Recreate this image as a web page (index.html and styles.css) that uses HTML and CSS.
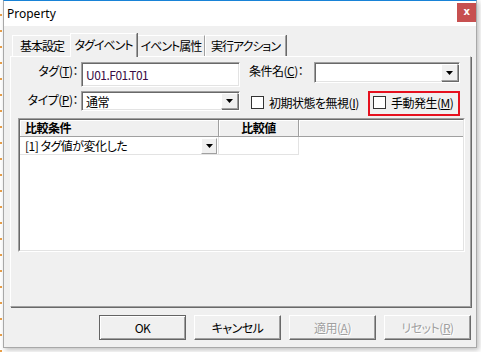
FILE: index.html
```html
<!DOCTYPE html>
<html lang="ja">
<head>
    <meta charset="UTF-8">
    <title>Property</title>
    <link rel="stylesheet" href="styles.css">
</head>
<body>
    <div class="window">
        <div class="titlebar">
            <span class="title">Property</span>
            <span class="close">x</span>
        </div>
        <div class="window-body">
            <div class="tabs">
                <div class="tab tab-basic">基本設定</div>
                <div class="tab tab-tag active">タグイベント</div>
                <div class="tab tab-attr">イベント属性</div>
                <div class="tab tab-action">実行アクション</div>
            </div>
            <div class="panel">
                <div class="row">
                    <span class="label">タグ(<u>T</u>)：</span>
                    <div class="textbox tag-input">U01.F01.T01</div>
                    <span class="label cond-label">条件名(<u>C</u>)：</span>
                    <div class="combo cond-combo">
                        <span class="combo-text"></span>
                        <span class="drop"><svg width="7" height="4" viewBox="0 0 7 4"><path d="M0 0h7l-3.5 4z" fill="#000"/></svg></span>
                    </div>
                </div>
                <div class="row row-type">
                    <span class="label">タイプ(<u>P</u>)：</span>
                    <div class="combo type-combo">
                        <span class="combo-text">通常</span>
                        <span class="drop"><svg width="7" height="4" viewBox="0 0 7 4"><path d="M0 0h7l-3.5 4z" fill="#000"/></svg></span>
                    </div>
                    <label class="check ignore-check"><span class="box"></span><span>初期状態を無視(<u>I</u>)</span></label>
                    <div class="highlight">
                        <label class="check"><span class="box"></span><span>手動発生(<u>M</u>)</span></label>
                    </div>
                </div>
                <div class="grid">
                    <div class="grid-body">
                        <div class="grid-head">
                            <div class="cell col-cond">比較条件</div>
                            <div class="cell col-value">比較値</div>
                            <div class="cell col-fill"></div>
                        </div>
                        <div class="grid-row">
                            <div class="cell col-cond">
                                <span>[1] タグ値が変化した</span>
                                <span class="drop small"><svg width="7" height="4" viewBox="0 0 7 4"><path d="M0 0h7l-3.5 4z" fill="#000"/></svg></span>
                            </div>
                            <div class="cell col-value"></div>
                        </div>
                    </div>
                </div>
            </div>
            <div class="buttons">
                <button class="btn default">OK</button>
                <button class="btn">キャンセル</button>
                <button class="btn" disabled>適用(<u>A</u>)</button>
                <button class="btn" disabled>リセット(<u>R</u>)</button>
            </div>
        </div>
    </div>
</body>
</html>
```

FILE: styles.css
```css
body {
    margin: 0;
    width: 481px;
    height: 352px;
    overflow: hidden;
    font-family: "Noto Sans CJK JP", sans-serif;
    font-size: 12px;
    font-feature-settings: "palt";
    letter-spacing: -0.5px;
    color: #000;
    background:
        repeating-linear-gradient(to bottom, #fff 0 14px, #e9a04a 14px 16px) left top / 2px 100% no-repeat,
        #fff;
}

u {
    text-decoration: underline;
    text-underline-offset: 1px;
}

.window {
    margin-left: 3px;
    width: 474px;
    height: 348px;
    box-sizing: border-box;
    display: flex;
    flex-direction: column;
    background: #f0f0f0;
    border: 1px solid #a8a8a8;
    border-top-color: #1883d7;
    box-shadow: 2px 2px 5px rgba(0, 0, 0, 0.25);
}

.titlebar {
    height: 25px;
    display: flex;
    align-items: flex-start;
    background: #fff;
}

.title {
    font-family: "Noto Sans", sans-serif;
    letter-spacing: 0;
    line-height: 25px;
    padding-left: 3px;
}

.close {
    margin: 2px 0 0 auto;
    width: 19px;
    height: 19px;
    background: #c75050;
    color: #fff;
    font-family: "DejaVu Sans", sans-serif;
    font-weight: bold;
    font-size: 10px;
    line-height: 18px;
    text-align: center;
}

.window-body {
    flex: 1;
    padding: 7px 5px 7px 6px;
    display: flex;
    flex-direction: column;
}

/* tabs */
.tabs {
    height: 23px;
    display: flex;
    align-items: flex-end;
    padding-left: 2px;
}

.tab {
    flex-shrink: 0;
    box-sizing: border-box;
    height: 21px;
    line-height: 20px;
    letter-spacing: -1px;
    text-align: center;
    border: 1px solid;
    border-bottom: 0;
    border-color: #fff #a0a0a0 transparent #fff;
    box-shadow: 1px 0 0 #696969;
    white-space: nowrap;
}

.tab-basic { width: 60px; }
.tab-tag { width: 67px; }
.tab-attr { width: 68px; }
.tab-action { width: 81px; }

.tab.active {
    position: relative;
    z-index: 1;
    height: 24px;
    line-height: 21px;
    margin: 0 0 -1px -2px;
    background: #f0f0f0;
}

.panel {
    height: 251px;
    box-sizing: border-box;
    padding: 5px 10px 0 0;
    border: 1px solid;
    border-color: #fff #a0a0a0 #a0a0a0 #fff;
    box-shadow: 1px 1px 0 #696969;
}

/* form rows */
.row {
    display: flex;
    align-items: flex-start;
    height: 25px;
}

.row > * {
    flex-shrink: 0;
}

.row-type {
    margin-top: 4px;
    height: 24px;
}

.label {
    width: 67px;
    margin-right: 3px;
    text-align: right;
    line-height: 17px;
    white-space: nowrap;
}

.cond-label {
    width: auto;
    margin: 0 0 0 9px;
    line-height: 18px;
}

.textbox,
.combo {
    box-sizing: border-box;
    background: #fff;
    border: 1px solid;
    border-color: #a0a0a0 #fff #fff #a0a0a0;
    box-shadow: inset 1px 1px 0 #696969, inset -1px -1px 0 #e3e3e3;
}

.textbox {
    height: 25px;
    line-height: 23px;
    padding-left: 4px;
}

.tag-input {
    width: 159px;
    color: #3a0c44;
}

.combo {
    display: flex;
    height: 21px;
    padding: 1px;
}

.cond-combo {
    width: 146px;
    margin-left: auto;
}

.type-combo {
    width: 159px;
    height: 20px;
}

.combo-text {
    flex: 1;
    padding-left: 3px;
    line-height: 17px;
}

.drop {
    width: 17px;
    box-sizing: border-box;
    display: flex;
    align-items: center;
    justify-content: center;
    background: #f0f0f0;
    border: 1px solid;
    border-color: #fff #a0a0a0 #a0a0a0 #fff;
    box-shadow: 1px 1px 0 #696969;
}

.drop.small {
    width: 16px;
    height: 16px;
    margin-left: auto;
    box-shadow: none;
}

/* checkboxes */
.check {
    display: flex;
    align-items: center;
    gap: 5px;
    line-height: 13px;
    white-space: nowrap;
}

.ignore-check {
    margin: 5px 0 0 11px;
}

.box {
    flex-shrink: 0;
    width: 13px;
    height: 13px;
    box-sizing: border-box;
    background: #fff;
    border: 1px solid #333;
}

.highlight {
    width: 92px;
    height: 25px;
    box-sizing: border-box;
    margin-left: auto;
    padding: 3px 0 0 3px;
    border: 2px solid #e6101e;
}

/* list grid */
.grid {
    width: 447px;
    height: 134px;
    margin: 3px 0 0 7px;
    box-sizing: border-box;
    border: 1px solid;
    border-color: #a0a0a0 #fff #fff #a0a0a0;
}

.grid-body {
    height: 100%;
    box-sizing: border-box;
    background: #fff;
    border: 1px solid;
    border-color: #696969 #e3e3e3 #e3e3e3 #696969;
}

.grid-head,
.grid-row {
    display: flex;
}

.grid-head {
    height: 17px;
    background: #f0f0f0;
    font-weight: bold;
}

.grid-head .cell {
    box-sizing: border-box;
    line-height: 16px;
    border-right: 1px solid #a0a0a0;
    border-bottom: 1px solid #a0a0a0;
    box-shadow: inset 1px 1px 0 #fff;
}

.col-cond {
    width: 199px;
    padding-left: 5px;
}

.col-value {
    width: 80px;
    text-align: center;
}

.grid-head .col-fill {
    flex: 1;
    border-right: 0;
}

.grid-row {
    height: 18px;
}

.grid-row .cell {
    box-sizing: border-box;
    border-bottom: 1px solid #e3e3e3;
}

.grid-row .col-cond {
    display: flex;
    align-items: center;
    padding-right: 1px;
    border-right: 1px solid #e3e3e3;
}

.grid-row .col-value {
    border-right: 1px solid #e3e3e3;
}

/* dialog buttons */
.buttons {
    display: flex;
    justify-content: flex-end;
    gap: 8px;
    margin-top: 8px;
}

.btn {
    width: 87px;
    height: 25px;
    padding: 0;
    font: inherit;
    letter-spacing: inherit;
    color: #000;
    background: #f0f0f0;
    border: 1px solid;
    border-color: #fff #696969 #696969 #fff;
    box-shadow: inset -1px -1px 0 #a0a0a0;
}

.btn.default {
    border-color: #646464;
    box-shadow: inset 1px 1px 0 #fff, inset -1px -1px 0 #a0a0a0;
}

.btn:disabled {
    color: #a0a0a0;
    text-shadow: 1px 1px 0 #fff;
}
```
